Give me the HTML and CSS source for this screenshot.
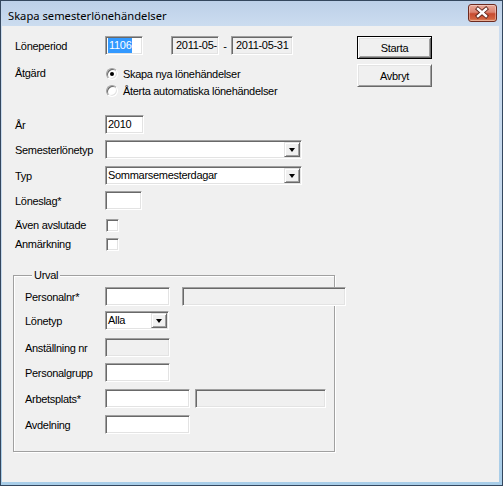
FILE: index.html
```html
<!DOCTYPE html>
<html lang="sv">
<head>
<meta charset="utf-8">
<title>Skapa semesterlönehändelser</title>
<link rel="stylesheet" href="styles.css">
</head>
<body>
<div class="window">
  <div class="titlebar">
    <span class="title">Skapa semesterlönehändelser</span>
    <div class="close">
      <svg width="27" height="16" viewBox="0 0 27 16">
        <path d="M9 4 L17 11 M17 4 L9 11" stroke="#5a2218" stroke-width="4.2" stroke-linecap="square" fill="none"/>
        <path d="M9 4 L17 11 M17 4 L9 11" stroke="#ffffff" stroke-width="2.4" stroke-linecap="square" fill="none"/>
      </svg>
    </div>
  </div>
  <div class="client">
    <div class="form">
      <div class="row r-period">
        <span class="label">Löneperiod</span>
        <span class="edit w38"><span class="sel">1106</span></span>
        <span class="edit ro w48 gap28">2011-05-</span>
        <span class="dash">-</span>
        <span class="edit ro w62">2011-05-31</span>
      </div>
      <div class="row r-action">
        <span class="label label-top">Åtgärd</span>
        <div class="radios">
          <div class="radio-line"><span class="radio checked"></span><span>Skapa nya lönehändelser</span></div>
          <div class="radio-line"><span class="radio"></span><span>Återta automatiska lönehändelser</span></div>
        </div>
      </div>
      <div class="row r-year">
        <span class="label">År</span>
        <span class="edit w39">2010</span>
      </div>
      <div class="row r-sltyp">
        <span class="label">Semesterlönetyp</span>
        <div class="combo w197"><span class="combo-text"></span><span class="dd"><span class="tri"></span></span></div>
      </div>
      <div class="row r-typ">
        <span class="label">Typ</span>
        <div class="combo w197"><span class="combo-text">Sommarsemesterdagar</span><span class="dd"><span class="tri"></span></span></div>
      </div>
      <div class="row r-slag">
        <span class="label">Löneslag*</span>
        <span class="edit w37"></span>
      </div>
      <div class="row r-check1">
        <span class="label">Även avslutade</span>
        <span class="check"></span>
      </div>
      <div class="row r-check2">
        <span class="label">Anmärkning</span>
        <span class="check"></span>
      </div>
      <fieldset class="group">
        <legend>Urval</legend>
        <div class="row">
          <span class="label">Personalnr*</span>
          <span class="edit w65"></span>
          <span class="edit ro w164 gap12"></span>
        </div>
        <div class="row g-lonetyp">
          <span class="label">Lönetyp</span>
          <div class="combo w64"><span class="combo-text">Alla</span><span class="dd"><span class="tri"></span></span></div>
        </div>
        <div class="row g-anst">
          <span class="label">Anställning nr</span>
          <span class="edit ro w65"></span>
        </div>
        <div class="row g-pgrupp">
          <span class="label">Personalgrupp</span>
          <span class="edit w65"></span>
        </div>
        <div class="row g-arb">
          <span class="label">Arbetsplats*</span>
          <span class="edit w85"></span>
          <span class="edit ro w131 gap5"></span>
        </div>
        <div class="row g-avd">
          <span class="label">Avdelning</span>
          <span class="edit w85"></span>
        </div>
      </fieldset>
    </div>
    <div class="actions">
      <button class="btn default" type="button">Starta</button>
      <button class="btn" type="button">Avbryt</button>
    </div>
  </div>
</div>
</body>
</html>
```
FILE: styles.css
```css
* { box-sizing: border-box; }
html, body { margin: 0; padding: 0; }
body {
  width: 503px;
  height: 486px;
  overflow: hidden;
  background: #ffffff;
  font-family: "Liberation Sans", Arial, sans-serif;
  font-size: 11px;
  letter-spacing: -0.3px;
  color: #000;
}
.window {
  width: 503px;
  height: 486px;
  border: 1px solid #34475e;
  background: linear-gradient(to bottom, #bcd0e8 0, #cbdcef 24px, #c4d8ec 60%, #a8cde8 100%);
  display: flex;
  flex-direction: column;
  padding: 0 3px 3px 1px;
}
.titlebar {
  height: 25px;
  display: flex;
  justify-content: space-between;
  align-items: flex-start;
  flex-shrink: 0;
}
.title {
  font-family: "Noto Sans", "Open Sans", sans-serif;
  font-size: 11.2px;
  letter-spacing: 0;
  line-height: 16px;
  padding: 7px 0 0 6px;
  color: #000;
}
.close {
  width: 29px;
  height: 18px;
  margin: 3px 2px 0 0;
  border: 1px solid #6d2a1f;
  border-radius: 3px;
  background: linear-gradient(to bottom, #e9a898 0%, #dc8471 45%, #c74a2f 55%, #d2623f 85%, #e08a62 100%);
  box-shadow: inset 0 0 0 1px rgba(255,255,255,0.35);
  display: flex;
  align-items: center;
  justify-content: center;
}
.close svg { display: block; }
.client {
  flex: 1;
  background: #f0f0f0;
  display: flex;
  padding: 10px 0 0 13px;
}
.form {
  width: 342px;
  flex-shrink: 0;
}
.actions {
  display: flex;
  flex-direction: column;
  gap: 5px;
}
.row {
  display: flex;
  align-items: center;
  white-space: nowrap;
}
.label {
  width: 90px;
  flex-shrink: 0;
}
.label-top { align-self: flex-start; line-height: 17px; }
.r-action { margin-top: 10px; align-items: flex-start; }
.r-year { margin-top: 16px; }
.r-sltyp { margin-top: 6px; }
.r-typ { margin-top: 7px; }
.r-slag { margin-top: 6px; }
.r-check1 { margin-top: 8px; height: 14px; }
.r-check2 { margin-top: 5px; height: 14px; }

.edit {
  height: 19px;
  flex-shrink: 0;
  background: #fff;
  border: 1px solid;
  border-color: #a0a0a0 #ffffff #ffffff #a0a0a0;
  box-shadow: inset 1px 1px 0 #696969, inset -1px -1px 0 #e3e3e3;
  padding: 0 0 0 2px;
  line-height: 17px;
  overflow: hidden;
  white-space: nowrap;
}
.edit.ro { background: #f0f0f0; padding-left: 4px; }
.sel {
  background: #3399ff;
  color: #fff;
  padding: 1px 1px 2px 1px;
}
.w37 { width: 37px; }
.w38 { width: 38px; }
.w39 { width: 39px; }
.w48 { width: 48px; }
.w62 { width: 62px; }
.w64 { width: 64px; }
.w65 { width: 65px; }
.w85 { width: 85px; }
.w131 { width: 131px; }
.w164 { width: 164px; }
.w197 { width: 197px; }
.gap28 { margin-left: 28px; }
.gap12 { margin-left: 12px; }
.gap5 { margin-left: 5px; }
.dash { width: 12px; text-align: center; flex-shrink: 0; }

.combo {
  height: 19px;
  flex-shrink: 0;
  display: flex;
  background: #fff;
  border: 1px solid;
  border-color: #a0a0a0 #ffffff #ffffff #a0a0a0;
  box-shadow: inset 1px 1px 0 #696969, inset -1px -1px 0 #e3e3e3;
  padding: 1px;
}
.combo-text {
  flex: 1;
  padding-left: 1px;
  line-height: 15px;
  overflow: hidden;
}
.dd {
  width: 16px;
  height: 15px;
  flex-shrink: 0;
  background: #f0f0f0;
  border: 1px solid;
  border-color: #e3e3e3 #696969 #696969 #e3e3e3;
  box-shadow: inset 1px 1px 0 #fff, inset -1px -1px 0 #a0a0a0;
  display: flex;
  align-items: center;
  justify-content: center;
}
.tri {
  width: 0;
  height: 0;
  border-left: 3.5px solid transparent;
  border-right: 3.5px solid transparent;
  border-top: 4px solid #000;
  margin-top: 1px;
}

.radios { display: flex; flex-direction: column; }
.radio-line {
  height: 17px;
  display: flex;
  align-items: center;
  gap: 5px;
}
.radio {
  width: 12px;
  height: 12px;
  margin-left: 1px;
  border-radius: 50%;
  background: #fff;
  border: 1px solid;
  border-color: #a0a0a0 #ffffff #ffffff #a0a0a0;
  box-shadow: inset 1px 1px 0 #696969, inset -1px -1px 0 #e3e3e3;
  display: flex;
  align-items: center;
  justify-content: center;
  flex-shrink: 0;
}
.radio.checked::after {
  content: "";
  width: 4px;
  height: 4px;
  border-radius: 50%;
  background: #000;
}
.check {
  width: 13px;
  height: 13px;
  margin-left: 1px;
  flex-shrink: 0;
  background: #fff;
  border: 1px solid;
  border-color: #a0a0a0 #ffffff #ffffff #a0a0a0;
  box-shadow: inset 1px 1px 0 #696969, inset -1px -1px 0 #e3e3e3;
}

.group {
  margin: 18px 0 0 -2px;
  width: 322px;
  min-width: 0;
  padding: 5px 0 17px 11px;
  border: 1px solid #a0a0a0;
  box-shadow: 1px 1px 0 #fff, inset 1px 1px 0 #fff;
}
.group legend {
  margin-left: 7px;
  padding: 0 2px;
  line-height: 13px;
  background: #f0f0f0;
}
.group .label { width: 80px; }
.g-lonetyp { margin-top: 5px; }
.g-anst { margin-top: 8px; }
.g-pgrupp { margin-top: 6px; }
.g-arb { margin-top: 7px; }
.g-avd { margin-top: 7px; }

.btn {
  width: 75px;
  height: 23px;
  padding: 0;
  font: inherit;
  letter-spacing: inherit;
  color: #000;
  background: #f0f0f0;
  border: 1px solid;
  border-color: #ffffff #696969 #696969 #ffffff;
  box-shadow: inset 1px 1px 0 #e3e3e3, inset -1px -1px 0 #a0a0a0;
}
.btn.default {
  border-color: #000;
  box-shadow: inset 1px 1px 0 #fff, inset -1px -1px 0 #696969, inset 2px 2px 0 #e3e3e3, inset -2px -2px 0 #a0a0a0;
}
```
